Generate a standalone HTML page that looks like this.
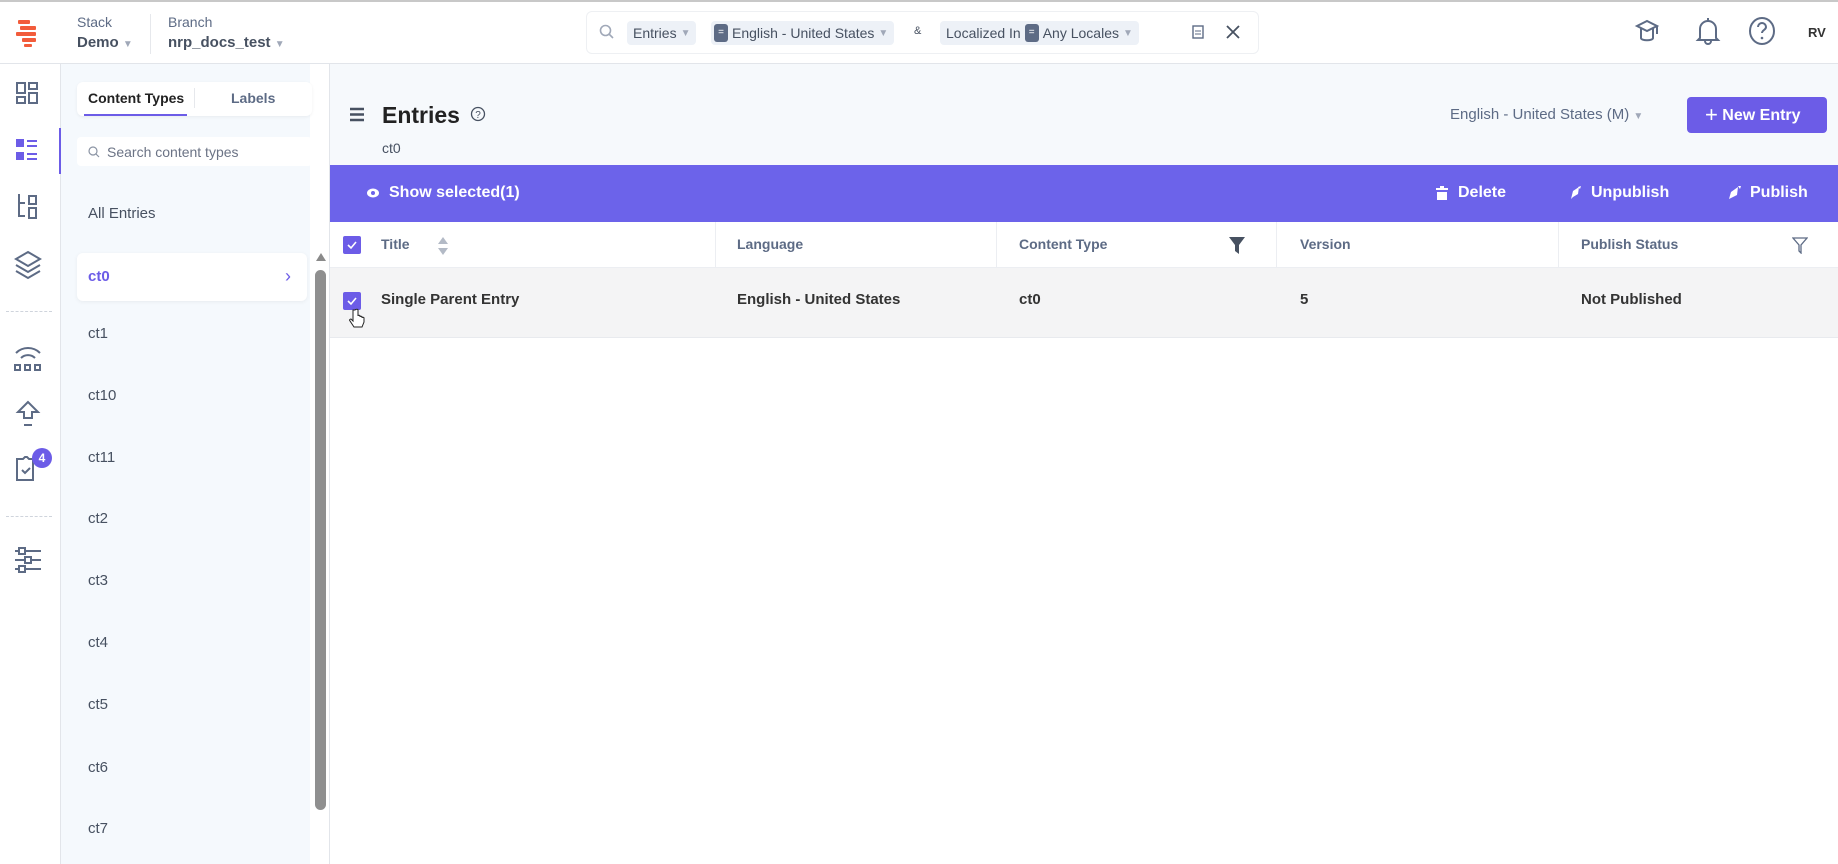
<!DOCTYPE html>
<html><head><meta charset="utf-8"><style>
*{box-sizing:border-box;margin:0;padding:0}
body{width:1838px;height:864px;overflow:hidden;background:#fff;font-family:"Liberation Sans",sans-serif;color:#222;position:relative}
.a{position:absolute}
.ic{stroke:#5d6b85;fill:none;stroke-width:2}
.sb{color:#fff;font-weight:bold;font-size:16px}
.li{position:absolute;left:88px;font-size:15px;color:#475161}
.th{position:absolute;top:236px;font-size:14px;font-weight:bold;color:#5d6b85}
.td{position:absolute;top:291px;font-size:15px;font-weight:bold;color:#333}
.chip{position:absolute;top:21px;height:24px;padding:0 6px;background:#edf1f7;border-radius:4px;font-size:14px;color:#475161;display:flex;align-items:center;gap:4px;white-space:nowrap}
.eq{display:inline-block;width:14px;height:18px;background:#5d6b85;border-radius:3px;color:#fff;font-size:10px;text-align:center;line-height:18px}
.dd{color:#a0a8b8;font-size:10px}
</style></head><body>
<div class="a" style="left:0;top:0;width:1838px;height:2px;background:#c8c8c8"></div>
<div class="a" style="left:0;top:63px;width:1838px;height:1px;background:#e2e5ea"></div>
<svg class="a" style="left:14px;top:18px" width="30" height="30" viewBox="0 0 30 30"><g fill="#f25c3b"><rect x="4" y="2" width="12" height="4" rx="1"/><rect x="6" y="8" width="16" height="4" rx="1"/><rect x="2" y="14" width="14" height="4" rx="1"/><rect x="10" y="14" width="12" height="4" rx="1"/><rect x="8" y="20" width="14" height="4" rx="1"/><rect x="10" y="26" width="8" height="3" rx="1"/></g></svg>
<div class="a" style="left:77px;top:14px;font-size:14px;color:#5d6b85">Stack</div>
<div class="a" style="left:77px;top:34px;font-size:15px;font-weight:bold;color:#475161">Demo <span class="dd">▼</span></div>
<div class="a" style="left:150px;top:14px;width:1px;height:40px;background:#e6e8ec"></div>
<div class="a" style="left:168px;top:14px;font-size:14px;color:#5d6b85">Branch</div>
<div class="a" style="left:168px;top:34px;font-size:15px;font-weight:bold;color:#475161">nrp_docs_test <span class="dd">▼</span></div>
<div class="a" style="left:586px;top:11px;width:673px;height:43px;border:1px solid #eef0f3;border-radius:6px;background:#fff"></div>
<svg class="a" style="left:599px;top:24px" width="16" height="16" viewBox="0 0 16 16"><circle cx="6.5" cy="6.5" r="5" stroke="#a0a8b8" stroke-width="1.6" fill="none"/><path d="M10 10l4 4" stroke="#a0a8b8" stroke-width="1.6"/></svg>
<div class="chip" style="left:627px">Entries <span class="dd">▼</span></div>
<div class="chip" style="left:711px;padding-left:3px"><span class="eq">=</span>English - United States <span class="dd">▼</span></div>
<div class="a" style="left:914px;top:25px;font-size:11px;color:#475161">&amp;</div>
<div class="chip" style="left:940px">Localized In <span class="eq">=</span>Any Locales <span class="dd">▼</span></div>
<svg class="a" style="left:1191px;top:25px" width="14" height="14" viewBox="0 0 14 14"><rect x="2" y="1" width="10" height="12" stroke="#5d6b85" stroke-width="1.4" fill="none"/><path d="M4 6h6M4 9h6" stroke="#5d6b85"/></svg>
<svg class="a" style="left:1226px;top:25px" width="14" height="14" viewBox="0 0 14 14"><path d="M1 1l12 12M13 1L1 13" stroke="#475161" stroke-width="1.8"/></svg>
<svg class="a" style="left:1633px;top:18px" width="28" height="28" viewBox="0 0 28 28"><path class="ic" d="M4 8l10-5 10 5-10 5zM8 10v10c0 3 12 3 12 0V10M24 8v8"/></svg>
<svg class="a" style="left:1694px;top:16px" width="28" height="30" viewBox="0 0 28 30"><path class="ic" d="M6 22V13a8 8 0 0116 0v9l2 2H4zM11 25a3 3 0 006 0M14 2v3"/></svg>
<svg class="a" style="left:1748px;top:16px" width="28" height="30" viewBox="0 0 28 30"><ellipse class="ic" cx="14" cy="15" rx="12" ry="13"/><path class="ic" d="M10 11a4 4 0 118 0c0 3-4 3-4 6"/><circle cx="14" cy="22" r="1.3" fill="#5d6b85"/></svg>
<div class="a" style="left:1808px;top:25px;font-size:13px;font-weight:bold;color:#333">RV</div>
<div class="a" style="left:60px;top:64px;width:1px;height:800px;background:#e2e5ea"></div>
<div class="a" style="left:59px;top:128px;width:2px;height:46px;background:#6c5ce7"></div>
<svg class="a" style="left:14px;top:80px" width="28" height="28" viewBox="0 0 28 28"><path class="ic" d="M3 3h8v10H3zM15 3h8v6h-8zM3 17h8v6H3zM15 13h8v10h-8z"/></svg>
<svg class="a" style="left:15px;top:137px" width="28" height="28" viewBox="0 0 28 28"><path fill="#6c5ce7" d="M1 2h8v8H1zM1 15h8v8H1z"/><path stroke="#6c5ce7" stroke-width="2" d="M12 4h10M12 9h10M12 17h10M12 22h10"/></svg>
<svg class="a" style="left:15px;top:193px" width="26" height="28" viewBox="0 0 26 28"><path class="ic" d="M4 1v22h6M4 10h6M14 3h7v8h-7zM14 15h7v10h-7z"/></svg>
<svg class="a" style="left:13px;top:250px" width="30" height="30" viewBox="0 0 30 30"><path class="ic" d="M15 2l12 7-12 7-12-7zM3 15l12 7 12-7M3 21l12 7 12-7"/></svg>
<div class="a" style="left:6px;top:311px;width:46px;border-top:1px dashed #cfd4dc"></div>
<svg class="a" style="left:13px;top:343px" width="30" height="30" viewBox="0 0 30 30"><path class="ic" d="M3 10a17 17 0 0124 0M8 15a10 10 0 0114 0"/><path class="ic" d="M2 22h5v5H2zM12 22h5v5h-5zM22 22h5v5h-5z" stroke-width="1.8"/></svg>
<svg class="a" style="left:15px;top:400px" width="26" height="28" viewBox="0 0 26 28"><path class="ic" d="M13 2L3 12h6v6h8v-6h6zM9 25h8"/></svg>
<svg class="a" style="left:14px;top:455px" width="30" height="30" viewBox="0 0 30 30"><path class="ic" d="M3 4h6l2-2h2l2 2h4v21H3zM8 15l3 3 5-5"/></svg>
<div class="a" style="left:32px;top:448px;width:20px;height:20px;border-radius:10px;background:#6c5ce7;color:#fff;font-size:12px;font-weight:bold;text-align:center;line-height:20px">4</div>
<div class="a" style="left:6px;top:516px;width:46px;border-top:1px dashed #cfd4dc"></div>
<svg class="a" style="left:14px;top:547px" width="28" height="28" viewBox="0 0 28 28"><path class="ic" d="M1 4h4M11 4h16M1 13h10M17 13h10M1 22h4M11 22h16M5 1h6v6H5zM11 10h6v6h-6zM5 19h6v6H5z" stroke-width="1.8"/></svg>
<div class="a" style="left:61px;top:64px;width:249px;height:800px;background:#f5f9fd"></div>
<div class="a" style="left:329px;top:64px;width:1px;height:800px;background:#e2e5ea"></div>
<div class="a" style="left:77px;top:82px;width:235px;height:34px;background:#fff;border-radius:6px;box-shadow:0 1px 3px rgba(0,0,0,.06)"></div>
<div class="a" style="left:88px;top:90px;font-size:14px;font-weight:bold;color:#222">Content Types</div>
<div class="a" style="left:84px;top:114px;width:103px;height:2px;background:#6c5ce7"></div>
<div class="a" style="left:194px;top:88px;width:1px;height:20px;background:#e6e8ec"></div>
<div class="a" style="left:231px;top:90px;font-size:14px;font-weight:bold;color:#5d6b85">Labels</div>
<div class="a" style="left:77px;top:137px;width:235px;height:29px;background:#fff;border-radius:4px"></div>
<svg class="a" style="left:88px;top:146px" width="12" height="12" viewBox="0 0 12 12"><circle cx="5" cy="5" r="4" stroke="#8a93a3" fill="none" stroke-width="1.2"/><path d="M8 8l3 3" stroke="#8a93a3" stroke-width="1.2"/></svg>
<div class="a" style="left:107px;top:144px;font-size:14px;color:#6b7385">Search content types</div>
<div class="li" style="top:205px">All Entries</div>
<div class="a" style="left:77px;top:253px;width:230px;height:48px;background:#fff;border-radius:6px;box-shadow:0 1px 4px rgba(0,0,0,.06)"></div>
<div class="li" style="top:268px;color:#6c5ce7;font-weight:bold">ct0</div>
<div class="a" style="left:285px;top:266px;color:#6c5ce7;font-size:18px">›</div>
<div class="li" style="top:325px">ct1</div>
<div class="li" style="top:387px">ct10</div>
<div class="li" style="top:449px">ct11</div>
<div class="li" style="top:510px">ct2</div>
<div class="li" style="top:572px">ct3</div>
<div class="li" style="top:634px">ct4</div>
<div class="li" style="top:696px">ct5</div>
<div class="li" style="top:759px">ct6</div>
<div class="li" style="top:820px">ct7</div>
<div class="a" style="left:316px;top:253px;width:0;height:0;border-left:5px solid transparent;border-right:5px solid transparent;border-bottom:8px solid #8a8a8a"></div>
<div class="a" style="left:315px;top:270px;width:11px;height:540px;border-radius:6px;background:#8f8f8f"></div>
<div class="a" style="left:330px;top:64px;width:1508px;height:101px;background:#f6f9fc"></div>
<svg class="a" style="left:349px;top:107px" width="16" height="15" viewBox="0 0 16 15"><path d="M1 2h14M1 7.5h14M1 13h14" stroke="#475161" stroke-width="2.4"/></svg>
<div class="a" style="left:382px;top:102px;font-size:23px;font-weight:bold;color:#222">Entries</div>
<svg class="a" style="left:470px;top:106px" width="16" height="16" viewBox="0 0 16 16"><circle cx="8" cy="8" r="6.5" stroke="#475161" fill="none" stroke-width="1.3"/><text x="8" y="12" font-size="10" text-anchor="middle" fill="#475161" font-family="Liberation Sans">?</text></svg>
<div class="a" style="left:382px;top:140px;font-size:14px;color:#475161">ct0</div>
<div class="a" style="left:1450px;top:106px;font-size:15px;color:#5d6b85">English - United States (M) <span class="dd">▼</span></div>
<div class="a" style="left:1687px;top:97px;width:140px;height:36px;background:#6c5ce7;border-radius:4px;color:#fff;font-size:16px;font-weight:bold;line-height:36px;padding-left:18px"><span style="font-size:22px;font-weight:normal;vertical-align:-2px">+</span> New Entry</div>
<div class="a" style="left:330px;top:165px;width:1508px;height:57px;background:#6c63ea"></div>
<svg class="a" style="left:366px;top:187px" width="14" height="12" viewBox="0 0 14 12"><ellipse cx="7" cy="6" rx="6" ry="4.5" fill="#fff"/><circle cx="7" cy="6" r="2" fill="#6c63ea"/></svg>
<div class="a sb" style="left:389px;top:184px">Show selected(1)</div>
<svg class="a" style="left:1435px;top:185px" width="14" height="16" viewBox="0 0 14 16"><path fill="#fff" d="M5 1h4v2h4v2H1V3h4zM2 7h10v8H2z"/></svg>
<div class="a sb" style="left:1458px;top:184px">Delete</div>
<svg class="a" style="left:1567px;top:185px" width="16" height="16" viewBox="0 0 16 16"><path fill="#fff" d="M4 14l2-8 6-4-1 7-5 3zM11 2l3-1-1 3z"/></svg>
<div class="a sb" style="left:1591px;top:184px">Unpublish</div>
<svg class="a" style="left:1726px;top:185px" width="16" height="16" viewBox="0 0 16 16"><path fill="#fff" d="M3 14l2-7 7-5-1 8-6 3zM12 1l3 0-1 3z"/></svg>
<div class="a sb" style="left:1750px;top:184px">Publish</div>
<div class="a" style="left:330px;top:222px;width:1508px;height:46px;background:#fff;border-bottom:1px solid #eceef2"></div>
<div class="a" style="left:715px;top:222px;width:1px;height:116px;background:#eceef2"></div>
<div class="a" style="left:996px;top:222px;width:1px;height:116px;background:#eceef2"></div>
<div class="a" style="left:1276px;top:222px;width:1px;height:116px;background:#eceef2"></div>
<div class="a" style="left:1558px;top:222px;width:1px;height:116px;background:#eceef2"></div>
<div class="a" style="left:343px;top:236px;width:18px;height:18px;background:#6c5ce7;border-radius:2px"></div>
<svg class="a" style="left:346px;top:239px" width="12" height="12" viewBox="0 0 12 12"><path d="M2 6l3 3 5-6" stroke="#fff" stroke-width="1.6" fill="none"/></svg>
<div class="th" style="left:381px">Title</div>
<svg class="a" style="left:437px;top:236px" width="12" height="20" viewBox="0 0 12 20"><path fill="#b3bac6" d="M6 1l5 7H1zM6 19l5-7H1z"/></svg>
<div class="th" style="left:737px">Language</div>
<div class="th" style="left:1019px">Content Type</div>
<svg class="a" style="left:1229px;top:237px" width="16" height="17" viewBox="0 0 16 17"><path fill="#475161" d="M0 0h16l-6 8v9l-4-3V8z"/></svg>
<div class="th" style="left:1300px">Version</div>
<div class="th" style="left:1581px">Publish Status</div>
<svg class="a" style="left:1792px;top:237px" width="16" height="17" viewBox="0 0 16 17"><path fill="none" stroke="#5d6b85" stroke-width="1.3" d="M1 1h14l-6 7v8l-2-2V8z"/></svg>
<div class="a" style="left:330px;top:268px;width:1508px;height:70px;background:#f4f4f5;border-bottom:1px solid #e8eaee"></div>
<div class="a" style="left:343px;top:292px;width:18px;height:18px;background:#6c5ce7;border-radius:2px"></div>
<svg class="a" style="left:346px;top:295px" width="12" height="12" viewBox="0 0 12 12"><path d="M2 6l3 3 5-6" stroke="#fff" stroke-width="1.6" fill="none"/></svg>
<svg class="a" style="left:349px;top:308px" width="16" height="22" viewBox="0 0 16 22"><path d="M4 2v11l-2-2c-1 0-2 1-1 2l4 6h8l2-5v-4c0-1-2-1-2 0v-1c0-1-2-1-2 0v-1c0-1-2-1-2 0V2c0-1-2-1-3 0z" fill="#fff" stroke="#222" stroke-width="1"/></svg>
<div class="td" style="left:381px">Single Parent Entry</div>
<div class="td" style="left:737px">English - United States</div>
<div class="td" style="left:1019px">ct0</div>
<div class="td" style="left:1300px">5</div>
<div class="td" style="left:1581px">Not Published</div>
</body></html>
